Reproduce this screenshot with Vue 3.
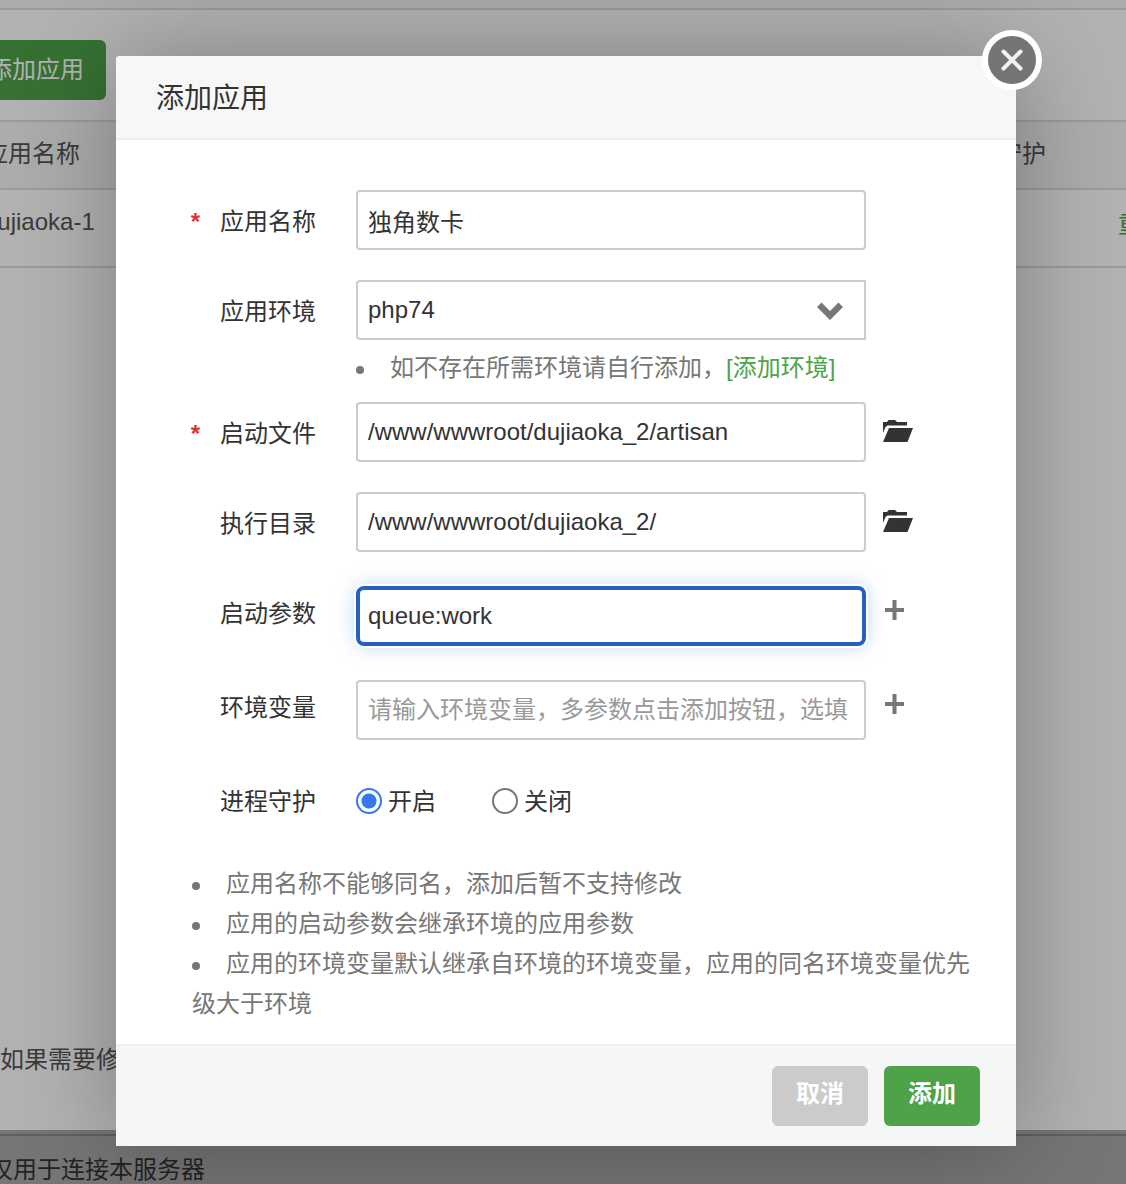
<script setup>
import { ref } from 'vue'

const name = ref('独角数卡')
const env = ref('php74')
const file = ref('/www/wwwroot/dujiaoka_2/artisan')
const dir = ref('/www/wwwroot/dujiaoka_2/')
const args = ref('queue:work')
const vars = ref('')
const guard = ref('on')

const notes = [
  '应用名称不能够同名，添加后暂不支持修改',
  '应用的启动参数会继承环境的应用参数',
  '应用的环境变量默认继承自环境的环境变量，应用的同名环境变量优先级大于环境',
]
</script>

<template>
  <div class="page">
    <div class="strip"></div>
    <main class="content">
      <div class="toolbar"><button type="button" class="open">添加应用</button></div>
      <table class="apps">
        <colgroup><col class="c-name" /><col class="c-guard" /><col /></colgroup>
        <thead>
          <tr><th>应用名称</th><th>进程守护</th><th></th></tr>
        </thead>
        <tbody>
          <tr><td>dujiaoka-1</td><td></td><td><a href="#">重启</a></td></tr>
        </tbody>
      </table>
      <p class="tip">如果需要修</p>
    </main>
    <footer class="bottom"><p>仅用于连接本服务器</p></footer>
  </div>

  <div class="overlay">
    <section class="modal" role="dialog" aria-labelledby="dialog-title">
      <header class="head"><h2 id="dialog-title">添加应用</h2></header>
      <button type="button" class="close" aria-label="关闭窗口">
        <svg viewBox="0 0 60 60" width="60" height="60">
          <circle cx="30" cy="30" r="27" fill="#757575" stroke="#fff" stroke-width="6" />
          <path d="M21.500 21.500 38.500 38.500M38.500 21.500 21.500 38.500" stroke="#f2f2f2" stroke-width="4" stroke-linecap="round" />
        </svg>
      </button>

      <form class="body" @submit.prevent>
        <div class="row">
          <label for="f-name"><span class="star">*</span>应用名称</label>
          <input id="f-name" v-model="name" class="field" type="text" />
        </div>
        <div class="row env">
          <label for="f-env">应用环境</label>
          <div class="picker">
            <select id="f-env" v-model="env" class="field"><option>php74</option></select>
            <svg class="chevron" viewBox="0 0 26 18" width="26" height="18">
              <path d="M0 5 4.500 .5 13 9 21.500 .5 26 5 13 18Z" fill="#777" />
            </svg>
          </div>
        </div>
        <p class="hint"><span class="dot"></span>如不存在所需环境请自行添加，<a href="#">[添加环境]</a></p>
        <div class="row">
          <label for="f-file"><span class="star">*</span>启动文件</label>
          <input id="f-file" v-model="file" class="field" type="text" />
          <button type="button" class="icon" aria-label="选择文件">
            <svg viewBox="0 0 32 24" width="32" height="24">
              <path d="M1 13V2H5L6.500 0H13L15 2H25V5.500H5.500L3.500 7Z" fill="#333" />
              <path d="M7 8H31L25.500 22H1Z" fill="#333" />
            </svg>
          </button>
        </div>
        <div class="row">
          <label for="f-dir">执行目录</label>
          <input id="f-dir" v-model="dir" class="field" type="text" />
          <button type="button" class="icon" aria-label="选择目录">
            <svg viewBox="0 0 32 24" width="32" height="24">
              <path d="M1 13V2H5L6.500 0H13L15 2H25V5.500H5.500L3.500 7Z" fill="#333" />
              <path d="M7 8H31L25.500 22H1Z" fill="#333" />
            </svg>
          </button>
        </div>
        <div class="row multi">
          <label for="f-args">启动参数</label>
          <input id="f-args" v-model="args" class="field active" type="text" />
          <button type="button" class="icon" aria-label="添加启动参数">
            <svg viewBox="0 0 24 24" width="24" height="24"><path d="M12.500 2V22M3 12H22" stroke="#777" stroke-width="4" /></svg>
          </button>
        </div>
        <div class="row multi">
          <label for="f-vars">环境变量</label>
          <input id="f-vars" v-model="vars" class="field" type="text" placeholder="请输入环境变量，多参数点击添加按钮，选填" />
          <button type="button" class="icon" aria-label="添加环境变量">
            <svg viewBox="0 0 24 24" width="24" height="24"><path d="M12.500 2V22M3 12H22" stroke="#777" stroke-width="4" /></svg>
          </button>
        </div>
        <div class="row guard" role="radiogroup" aria-labelledby="guard-label">
          <span id="guard-label" class="caption">进程守护</span>
          <label class="choice"><input v-model="guard" type="radio" name="guard" value="on" />开启</label>
          <label class="choice"><input v-model="guard" type="radio" name="guard" value="off" />关闭</label>
        </div>
        <ul class="notes">
          <li v-for="n in notes" :key="n"><span class="dot"></span>{{ n }}</li>
        </ul>
      </form>

      <footer class="foot">
        <button type="button" class="btn cancel">取消</button>
        <button type="button" class="btn">添加</button>
      </footer>
    </section>
  </div>
</template>

<style>
body {
  margin: 0;
  font: 24px/40px "Liberation Sans", "Noto Sans CJK SC", sans-serif;
  color: #333;
}
</style>

<style scoped>
* { box-sizing: border-box; }
p, h2, ul { margin: 0; padding: 0; }
button, input, select { font: inherit; color: inherit; }
button { border: 0; padding: 0; background: none; cursor: pointer; }
a { color: #4ea24a; text-decoration: none; }

.page {
  display: flex;
  flex-direction: column;
  min-height: 100vh;
  overflow: hidden;
  background: #fff;
  color: #555;
}
.strip { height: 10px; background: #f7f7f7; border-bottom: 2px solid #ddd; }
.content { flex: 1; display: flex; flex-direction: column; margin-left: -36px; }
.toolbar { padding: 30px 0 20px; }
.open {
  height: 60px;
  padding: 0 22px 0 24px;
  border-radius: 6px;
  background: #4ea24a;
  color: #fff;
}
.apps {
  width: 100%;
  table-layout: fixed;
  border-collapse: separate;
  border-spacing: 0;
  border-top: 2px solid #ddd;
  text-align: left;
}
.c-name { width: 966px; }
.c-guard { width: 168px; }
.apps th, .apps td { padding: 0 0 2px 20px; border-bottom: 2px solid #ddd; white-space: nowrap; }
.apps th { height: 68px; font-weight: 400; background: #f6f6f6; }
.apps td { height: 78px; padding-bottom: 12px; }
.apps td a { display: block; padding-top: 6px; }
.tip { margin: auto 0 50px 36px; }
.bottom {
  padding-top: 4px;
  background: #aaa;
  color: #333;
}
.bottom p { height: 50px; padding-top: 14px; border-top: 2px solid #888; line-height: 40px; margin-left: -11px; }

.overlay {
  position: absolute;
  inset: 0;
  display: flex;
  justify-content: center;
  align-items: flex-start;
  padding: 56px 0 0 6px;
  overflow: hidden;
  background: rgba(0, 0, 0, .3);
}
.modal {
  position: relative;
  width: 80%;
  min-width: 900px;
  max-width: 900px;
  border-radius: 4px 4px 0 0;
  background: #fff;
  box-shadow: 2px 2px 100px rgba(0, 0, 0, .3);
}
.head {
  padding: 4px 40px 0;
  border-bottom: 2px solid #eee;
  border-radius: 4px 4px 0 0;
  background: #f7f7f7;
}
.head h2 { font-size: 28px; line-height: 78px; font-weight: 400; }
.close { position: absolute; top: -26px; right: -26px; width: 60px; height: 60px; }
svg { display: block; fill: none; }

.body { padding: 50px 40px 20px; }
.row { display: flex; align-items: flex-start; margin-bottom: 30px; }
.row > label:first-child, .caption {
  width: 160px;
  height: 60px;
  margin-right: 40px;
  line-height: 64px;
  text-align: right;
}
.star { margin-right: 20px; color: #e03030; font-weight: 700; }
.field {
  display: block;
  width: 510px;
  height: 60px;
  padding: 0 10px;
  border: 2px solid #ccc;
  border-radius: 4px;
  outline: 0;
  background: #fff;
}
.field::placeholder { color: #999; opacity: 1; }
.field.active {
  padding: 0 8px;
  border: 4px solid #2860c0;
  border-radius: 8px;
  box-shadow: 0 0 0 2px #fff, 0 0 20px rgba(80, 150, 240, .4);
}
.picker { position: relative; }
.picker .field { appearance: none; border-radius: 4px 0 0 4px; }
.chevron { position: absolute; right: 23px; top: 22px; pointer-events: none; }
.env { margin-bottom: 8px; }
.hint { margin: 0 0 14px 200px; color: #777; }
.icon { display: flex; align-items: center; height: 60px; margin-left: 16px; }
.multi { margin: 34px 0; }
.multi > label:first-child { line-height: 56px; }
.multi .icon { height: 48px; }
.guard { margin: 34px 0; }
.row > .caption { height: 56px; line-height: 56px; }
.choice { display: flex; align-items: center; height: 56px; margin-right: 56px; }
.choice input {
  appearance: none;
  width: 26px;
  height: 26px;
  margin: 0 6px 2px 0;
  border: 2px solid #777;
  border-radius: 50%;
  background: #fff;
}
.choice input:checked { border-color: #3478f6; background: radial-gradient(circle, #3478f6 7px, #fff 8px); }
.notes { padding-left: 36px; list-style: none; color: #777; }
.dot {
  display: inline-block;
  width: 8px;
  height: 8px;
  margin-right: 26px;
  border-radius: 50%;
  background: #777;
  vertical-align: 2px;
}

.foot {
  display: flex;
  justify-content: flex-end;
  gap: 16px;
  padding: 20px 36px;
  border-top: 2px solid #edf1f2;
  background: #f5f7f7;
}
.btn {
  width: 96px;
  height: 60px;
  padding-bottom: 4px;
  border-radius: 6px;
  background: #4ea24a;
  color: #fff;
  font-weight: 700;
}
.cancel { background: #cbcbcb; }
</style>
